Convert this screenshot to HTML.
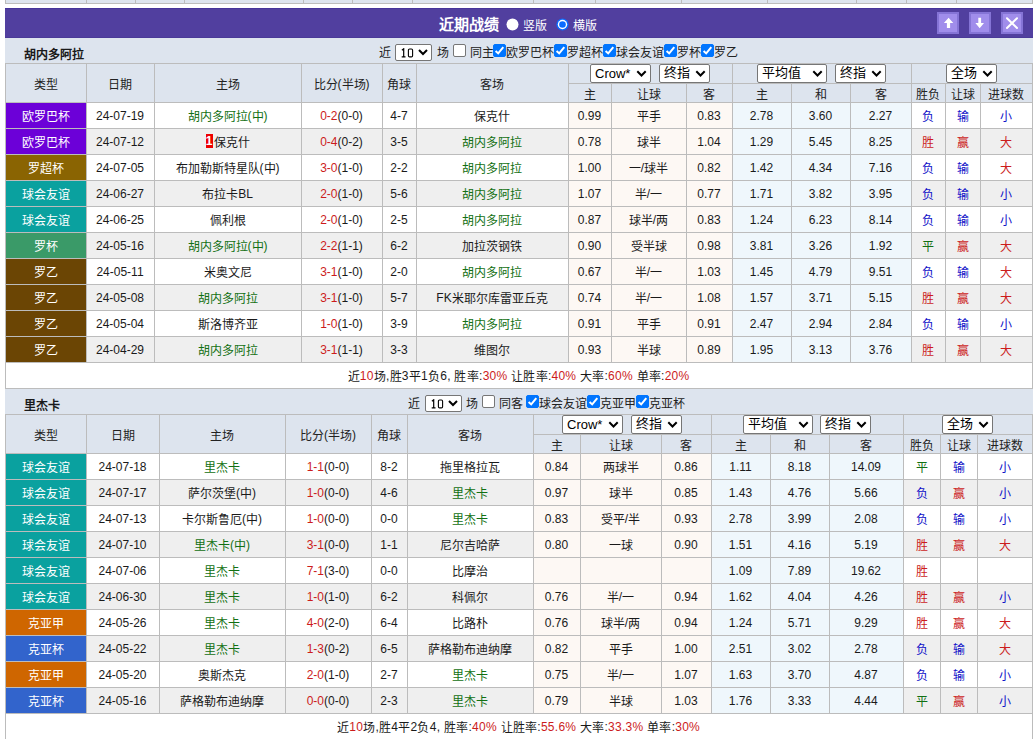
<!DOCTYPE html>
<html lang="zh-CN"><head><meta charset="utf-8"><title>近期战绩</title><style>
*{margin:0;padding:0;box-sizing:border-box}
html,body{width:1036px;height:739px;overflow:hidden;background:#fff}
body{font-family:"Liberation Sans",sans-serif;font-size:12px;color:#1a1a1a;position:relative}
.strip{position:absolute;left:5px;top:0;width:1028px;height:4px;background:#dde4ee;border:1px solid #bcbcbc;border-top:none}
.bar{position:absolute;left:5px;top:8px;width:1028px;height:30px;background:#513f9f;border-top:1px solid #45349a;border-bottom:1px solid #4a3a98}
.title{position:absolute;left:439px;top:15px;color:#fff;font-size:15px;font-weight:bold;line-height:18px}
.radio{position:absolute;top:18px}
.rl{position:absolute;top:18px;color:#fff;font-size:12px;line-height:15px}
.btn{position:absolute;top:12px;width:22px;height:22px;background:#a08deb;border:2px solid #8574d6}
.teamrow{position:absolute;height:25px;background:#dde4ee}
.team{position:absolute;height:25px;line-height:34px;font-weight:bold;color:#1a1a1a;font-size:12px}
.hdr{position:absolute;background:#dde4ee}
.cell{position:absolute;height:25px;line-height:26px;text-align:center;white-space:nowrap;overflow:hidden;background:#fff}
.cell.hc{background:transparent;color:#222}
.cell.alt{background:#efefef}
.cell.lg{color:#fff}
.cell.od{background:#fdf8f4}
.cell.av{background:#eff7fc}
.vl{position:absolute;width:1px;background:#bcbcbc}
.hl{position:absolute;height:1px;background:#bcbcbc}
.rc{display:inline-block;background:#e00;color:#fff;font-weight:bold;padding:0;width:7px;text-align:center;line-height:14px;height:14px;vertical-align:1px;margin-right:1px}
.summ{position:absolute;height:25px;line-height:26px;letter-spacing:0.27px;text-align:center;background:#fff;padding-left:0}
.ftx{position:absolute;height:25px;line-height:25px;white-space:nowrap;color:#222}
.ftx i{top:4px}
.fsel{position:absolute;width:37px;height:17px;border:1px solid #767676;border-radius:2px;background:#fff}
.fsel .d10{position:absolute;left:5px;top:3px}
.fsel .chev{position:absolute;right:3px;top:4px}
.mono{font-family:"Liberation Mono",monospace;font-size:12px;line-height:15px;position:relative;top:0px}
.cb{position:absolute;width:13px;height:13px;border:1px solid #767676;border-radius:2px;background:#fff}
.cb.on{background:#0075ff;border-color:#0075ff}
.cb.on svg{display:block;margin:-1px}
.sel{position:absolute;height:19px;border:1px solid #767676;border-radius:2px;background:#fff;padding:0 0 0 4px;color:#000;font-size:13px;line-height:17px;white-space:nowrap}
.sel .chev{position:absolute;right:3px;top:5px}
.chev{flex:none}
i{font-style:normal;position:relative;top:1px}
.sel i{top:-1px}
.hc i{top:1px}
title i{top:0}
</style></head><body>
<div class="strip"></div>
<div class="vl" style="left:86px;top:0;height:4px"></div>
<div class="vl" style="left:135px;top:0;height:4px"></div>
<div class="vl" style="left:184px;top:0;height:4px"></div>
<div class="vl" style="left:303px;top:0;height:4px"></div>
<div class="vl" style="left:352px;top:0;height:4px"></div>
<div class="vl" style="left:412px;top:0;height:4px"></div>
<div class="vl" style="left:533px;top:0;height:4px"></div>
<div class="vl" style="left:595px;top:0;height:4px"></div>
<div class="vl" style="left:681px;top:0;height:4px"></div>
<div class="vl" style="left:767px;top:0;height:4px"></div>
<div class="vl" style="left:856px;top:0;height:4px"></div>
<div class="vl" style="left:906px;top:0;height:4px"></div>
<div class="vl" style="left:956px;top:0;height:4px"></div>
<div class="bar"></div>
<div class="title"><i>近期战绩</i></div>
<svg class="radio" style="left:506px" width="13" height="13" viewBox="0 0 13 13"><circle cx="6.5" cy="6.5" r="6" fill="#fff"/></svg><div class="rl" style="left:523px"><i>竖版</i></div>
<svg class="radio" style="left:556px" width="13" height="13" viewBox="0 0 13 13"><circle cx="6.5" cy="6.5" r="6.1" fill="#0b6cff"/><circle cx="6.5" cy="6.5" r="4.7" fill="#fff"/><circle cx="6.5" cy="6.5" r="3.3" fill="#0b6cff"/></svg><div class="rl" style="left:573px"><i>横版</i></div>
<div class="btn" style="left:937px"><svg width="18" height="18" viewBox="0 0 18 18"><path d="M9.6 3.8 L14.3 8.9 L11.1 8.9 L11.1 14 L7.9 14 L7.9 8.9 L4.9 8.9 Z" fill="#fff"/></svg></div>
<div class="btn" style="left:969px"><svg width="18" height="18" viewBox="0 0 18 18"><path d="M8.7 14.3 L13 8.9 L10.1 8.9 L10.1 3.8 L7.3 3.8 L7.3 8.9 L4.4 8.9 Z" fill="#fff"/></svg></div>
<div class="btn" style="left:1001px"><svg width="18" height="18" viewBox="0 0 18 18"><path d="M4 4.2 L14 14 M14 4.2 L4 14" stroke="#fff" stroke-width="2" stroke-linecap="round"/></svg></div>
<div class="teamrow" style="top:38px;left:5px;width:1028px"></div>
<div class="team" style="top:37px;left:24px"><i>胡内多阿拉</i></div>
<div class="hdr" style="top:63px;left:5px;width:1027px;height:39px"></div>
<div class="cell hc" style="left:5px;top:63px;width:81px;height:39px;line-height:43px"><i>类型</i></div>
<div class="cell hc" style="left:86px;top:63px;width:68px;height:39px;line-height:43px"><i>日期</i></div>
<div class="cell hc" style="left:154px;top:63px;width:147px;height:39px;line-height:43px"><i>主场</i></div>
<div class="cell hc" style="left:301px;top:63px;width:81px;height:39px;line-height:43px"><i>比分</i>(<i>半场</i>)</div>
<div class="cell hc" style="left:382px;top:63px;width:34px;height:39px;line-height:43px"><i>角球</i></div>
<div class="cell hc" style="left:416px;top:63px;width:152px;height:39px;line-height:43px"><i>客场</i></div>
<div class="cell hc" style="left:568px;top:83px;width:43px;height:19px;line-height:23px"><i>主</i></div>
<div class="cell hc" style="left:611px;top:83px;width:75px;height:19px;line-height:23px"><i>让球</i></div>
<div class="cell hc" style="left:686px;top:83px;width:46px;height:19px;line-height:23px"><i>客</i></div>
<div class="cell hc" style="left:732px;top:83px;width:59px;height:19px;line-height:23px"><i>主</i></div>
<div class="cell hc" style="left:791px;top:83px;width:59px;height:19px;line-height:23px"><i>和</i></div>
<div class="cell hc" style="left:850px;top:83px;width:61px;height:19px;line-height:23px"><i>客</i></div>
<div class="cell hc" style="left:911px;top:83px;width:34px;height:19px;line-height:23px"><i>胜负</i></div>
<div class="cell hc" style="left:945px;top:83px;width:35px;height:19px;line-height:23px"><i>让球</i></div>
<div class="cell hc" style="left:980px;top:83px;width:52px;height:19px;line-height:23px"><i>进球数</i></div>
<div class="vl" style="left:568px;top:63px;height:40px"></div>
<div class="vl" style="left:732px;top:63px;height:40px"></div>
<div class="vl" style="left:911px;top:63px;height:40px"></div>
<div class="vl" style="left:86px;top:63px;height:40px"></div>
<div class="vl" style="left:154px;top:63px;height:40px"></div>
<div class="vl" style="left:301px;top:63px;height:40px"></div>
<div class="vl" style="left:382px;top:63px;height:40px"></div>
<div class="vl" style="left:416px;top:63px;height:40px"></div>
<div class="vl" style="left:568px;top:83px;height:20px"></div>
<div class="vl" style="left:611px;top:83px;height:20px"></div>
<div class="vl" style="left:686px;top:83px;height:20px"></div>
<div class="vl" style="left:732px;top:83px;height:20px"></div>
<div class="vl" style="left:791px;top:83px;height:20px"></div>
<div class="vl" style="left:850px;top:83px;height:20px"></div>
<div class="vl" style="left:911px;top:83px;height:20px"></div>
<div class="vl" style="left:945px;top:83px;height:20px"></div>
<div class="vl" style="left:980px;top:83px;height:20px"></div>
<div class="hl" style="left:568px;top:83px;width:464px"></div>
<div class="cell lg" style="left:5px;top:103px;width:81px;background:#6c00d8"><i>欧罗巴杯</i></div>
<div class="cell" style="left:86px;top:103px;width:68px">24-07-19</div>
<div class="cell" style="left:154px;top:103px;width:147px"><span style="color:#127012"><i>胡内多阿拉</i>(<i>中</i>)</span></div>
<div class="cell" style="left:301px;top:103px;width:81px"><span style="color:#cc1c1c">0-2</span>(0-0)</div>
<div class="cell" style="left:382px;top:103px;width:34px">4-7</div>
<div class="cell" style="left:416px;top:103px;width:152px"><span style="color:#1a1a1a"><i>保克什</i></span></div>
<div class="cell od" style="left:568px;top:103px;width:43px">0.99</div>
<div class="cell od" style="left:611px;top:103px;width:75px"><i>平手</i></div>
<div class="cell od" style="left:686px;top:103px;width:46px">0.83</div>
<div class="cell av" style="left:732px;top:103px;width:59px">2.78</div>
<div class="cell av" style="left:791px;top:103px;width:59px">3.60</div>
<div class="cell av" style="left:850px;top:103px;width:61px">2.27</div>
<div class="cell" style="left:911px;top:103px;width:34px;color:#1010c8"><i>负</i></div>
<div class="cell" style="left:945px;top:103px;width:35px;color:#1010c8"><i>输</i></div>
<div class="cell" style="left:980px;top:103px;width:52px;color:#1010c8"><i>小</i></div>
<div class="hl" style="left:5px;top:128px;width:1027px"></div>
<div class="vl" style="left:86px;top:102px;height:27px"></div>
<div class="vl" style="left:154px;top:102px;height:27px"></div>
<div class="vl" style="left:301px;top:102px;height:27px"></div>
<div class="vl" style="left:382px;top:102px;height:27px"></div>
<div class="vl" style="left:416px;top:102px;height:27px"></div>
<div class="vl" style="left:568px;top:102px;height:27px"></div>
<div class="vl" style="left:611px;top:102px;height:27px"></div>
<div class="vl" style="left:686px;top:102px;height:27px"></div>
<div class="vl" style="left:732px;top:102px;height:27px"></div>
<div class="vl" style="left:791px;top:102px;height:27px"></div>
<div class="vl" style="left:850px;top:102px;height:27px"></div>
<div class="vl" style="left:911px;top:102px;height:27px"></div>
<div class="vl" style="left:945px;top:102px;height:27px"></div>
<div class="vl" style="left:980px;top:102px;height:27px"></div>
<div class="cell lg" style="left:5px;top:129px;width:81px;background:#6c00d8"><i>欧罗巴杯</i></div>
<div class="cell alt" style="left:86px;top:129px;width:68px">24-07-12</div>
<div class="cell alt" style="left:154px;top:129px;width:147px"><span style="color:#1a1a1a"><span class="rc">1</span><i>保克什</i></span></div>
<div class="cell alt" style="left:301px;top:129px;width:81px"><span style="color:#cc1c1c">0-4</span>(0-2)</div>
<div class="cell alt" style="left:382px;top:129px;width:34px">3-5</div>
<div class="cell alt" style="left:416px;top:129px;width:152px"><span style="color:#127012"><i>胡内多阿拉</i></span></div>
<div class="cell od" style="left:568px;top:129px;width:43px">0.78</div>
<div class="cell od" style="left:611px;top:129px;width:75px"><i>球半</i></div>
<div class="cell od" style="left:686px;top:129px;width:46px">1.04</div>
<div class="cell av" style="left:732px;top:129px;width:59px">1.29</div>
<div class="cell av" style="left:791px;top:129px;width:59px">5.45</div>
<div class="cell av" style="left:850px;top:129px;width:61px">8.25</div>
<div class="cell alt" style="left:911px;top:129px;width:34px;color:#cc1c1c"><i>胜</i></div>
<div class="cell alt" style="left:945px;top:129px;width:35px;color:#cc1c1c"><i>赢</i></div>
<div class="cell alt" style="left:980px;top:129px;width:52px;color:#cc1c1c"><i>大</i></div>
<div class="hl" style="left:5px;top:154px;width:1027px"></div>
<div class="vl" style="left:86px;top:128px;height:27px"></div>
<div class="vl" style="left:154px;top:128px;height:27px"></div>
<div class="vl" style="left:301px;top:128px;height:27px"></div>
<div class="vl" style="left:382px;top:128px;height:27px"></div>
<div class="vl" style="left:416px;top:128px;height:27px"></div>
<div class="vl" style="left:568px;top:128px;height:27px"></div>
<div class="vl" style="left:611px;top:128px;height:27px"></div>
<div class="vl" style="left:686px;top:128px;height:27px"></div>
<div class="vl" style="left:732px;top:128px;height:27px"></div>
<div class="vl" style="left:791px;top:128px;height:27px"></div>
<div class="vl" style="left:850px;top:128px;height:27px"></div>
<div class="vl" style="left:911px;top:128px;height:27px"></div>
<div class="vl" style="left:945px;top:128px;height:27px"></div>
<div class="vl" style="left:980px;top:128px;height:27px"></div>
<div class="cell lg" style="left:5px;top:155px;width:81px;background:#8a6402"><i>罗超杯</i></div>
<div class="cell" style="left:86px;top:155px;width:68px">24-07-05</div>
<div class="cell" style="left:154px;top:155px;width:147px"><span style="color:#1a1a1a"><i>布加勒斯特星队</i>(<i>中</i>)</span></div>
<div class="cell" style="left:301px;top:155px;width:81px"><span style="color:#cc1c1c">3-0</span>(1-0)</div>
<div class="cell" style="left:382px;top:155px;width:34px">2-2</div>
<div class="cell" style="left:416px;top:155px;width:152px"><span style="color:#127012"><i>胡内多阿拉</i></span></div>
<div class="cell od" style="left:568px;top:155px;width:43px">1.00</div>
<div class="cell od" style="left:611px;top:155px;width:75px"><i>一</i>/<i>球半</i></div>
<div class="cell od" style="left:686px;top:155px;width:46px">0.82</div>
<div class="cell av" style="left:732px;top:155px;width:59px">1.42</div>
<div class="cell av" style="left:791px;top:155px;width:59px">4.34</div>
<div class="cell av" style="left:850px;top:155px;width:61px">7.16</div>
<div class="cell" style="left:911px;top:155px;width:34px;color:#1010c8"><i>负</i></div>
<div class="cell" style="left:945px;top:155px;width:35px;color:#1010c8"><i>输</i></div>
<div class="cell" style="left:980px;top:155px;width:52px;color:#cc1c1c"><i>大</i></div>
<div class="hl" style="left:5px;top:180px;width:1027px"></div>
<div class="vl" style="left:86px;top:154px;height:27px"></div>
<div class="vl" style="left:154px;top:154px;height:27px"></div>
<div class="vl" style="left:301px;top:154px;height:27px"></div>
<div class="vl" style="left:382px;top:154px;height:27px"></div>
<div class="vl" style="left:416px;top:154px;height:27px"></div>
<div class="vl" style="left:568px;top:154px;height:27px"></div>
<div class="vl" style="left:611px;top:154px;height:27px"></div>
<div class="vl" style="left:686px;top:154px;height:27px"></div>
<div class="vl" style="left:732px;top:154px;height:27px"></div>
<div class="vl" style="left:791px;top:154px;height:27px"></div>
<div class="vl" style="left:850px;top:154px;height:27px"></div>
<div class="vl" style="left:911px;top:154px;height:27px"></div>
<div class="vl" style="left:945px;top:154px;height:27px"></div>
<div class="vl" style="left:980px;top:154px;height:27px"></div>
<div class="cell lg" style="left:5px;top:181px;width:81px;background:#0aa19f"><i>球会友谊</i></div>
<div class="cell alt" style="left:86px;top:181px;width:68px">24-06-27</div>
<div class="cell alt" style="left:154px;top:181px;width:147px"><span style="color:#1a1a1a"><i>布拉卡</i>BL</span></div>
<div class="cell alt" style="left:301px;top:181px;width:81px"><span style="color:#cc1c1c">2-0</span>(1-0)</div>
<div class="cell alt" style="left:382px;top:181px;width:34px">5-6</div>
<div class="cell alt" style="left:416px;top:181px;width:152px"><span style="color:#127012"><i>胡内多阿拉</i></span></div>
<div class="cell od" style="left:568px;top:181px;width:43px">1.07</div>
<div class="cell od" style="left:611px;top:181px;width:75px"><i>半</i>/<i>一</i></div>
<div class="cell od" style="left:686px;top:181px;width:46px">0.77</div>
<div class="cell av" style="left:732px;top:181px;width:59px">1.71</div>
<div class="cell av" style="left:791px;top:181px;width:59px">3.82</div>
<div class="cell av" style="left:850px;top:181px;width:61px">3.95</div>
<div class="cell alt" style="left:911px;top:181px;width:34px;color:#1010c8"><i>负</i></div>
<div class="cell alt" style="left:945px;top:181px;width:35px;color:#1010c8"><i>输</i></div>
<div class="cell alt" style="left:980px;top:181px;width:52px;color:#1010c8"><i>小</i></div>
<div class="hl" style="left:5px;top:206px;width:1027px"></div>
<div class="vl" style="left:86px;top:180px;height:27px"></div>
<div class="vl" style="left:154px;top:180px;height:27px"></div>
<div class="vl" style="left:301px;top:180px;height:27px"></div>
<div class="vl" style="left:382px;top:180px;height:27px"></div>
<div class="vl" style="left:416px;top:180px;height:27px"></div>
<div class="vl" style="left:568px;top:180px;height:27px"></div>
<div class="vl" style="left:611px;top:180px;height:27px"></div>
<div class="vl" style="left:686px;top:180px;height:27px"></div>
<div class="vl" style="left:732px;top:180px;height:27px"></div>
<div class="vl" style="left:791px;top:180px;height:27px"></div>
<div class="vl" style="left:850px;top:180px;height:27px"></div>
<div class="vl" style="left:911px;top:180px;height:27px"></div>
<div class="vl" style="left:945px;top:180px;height:27px"></div>
<div class="vl" style="left:980px;top:180px;height:27px"></div>
<div class="cell lg" style="left:5px;top:207px;width:81px;background:#0aa19f"><i>球会友谊</i></div>
<div class="cell" style="left:86px;top:207px;width:68px">24-06-25</div>
<div class="cell" style="left:154px;top:207px;width:147px"><span style="color:#1a1a1a"><i>佩利根</i></span></div>
<div class="cell" style="left:301px;top:207px;width:81px"><span style="color:#cc1c1c">2-0</span>(1-0)</div>
<div class="cell" style="left:382px;top:207px;width:34px">2-5</div>
<div class="cell" style="left:416px;top:207px;width:152px"><span style="color:#127012"><i>胡内多阿拉</i></span></div>
<div class="cell od" style="left:568px;top:207px;width:43px">0.87</div>
<div class="cell od" style="left:611px;top:207px;width:75px"><i>球半</i>/<i>两</i></div>
<div class="cell od" style="left:686px;top:207px;width:46px">0.83</div>
<div class="cell av" style="left:732px;top:207px;width:59px">1.24</div>
<div class="cell av" style="left:791px;top:207px;width:59px">6.23</div>
<div class="cell av" style="left:850px;top:207px;width:61px">8.14</div>
<div class="cell" style="left:911px;top:207px;width:34px;color:#1010c8"><i>负</i></div>
<div class="cell" style="left:945px;top:207px;width:35px;color:#1010c8"><i>输</i></div>
<div class="cell" style="left:980px;top:207px;width:52px;color:#1010c8"><i>小</i></div>
<div class="hl" style="left:5px;top:232px;width:1027px"></div>
<div class="vl" style="left:86px;top:206px;height:27px"></div>
<div class="vl" style="left:154px;top:206px;height:27px"></div>
<div class="vl" style="left:301px;top:206px;height:27px"></div>
<div class="vl" style="left:382px;top:206px;height:27px"></div>
<div class="vl" style="left:416px;top:206px;height:27px"></div>
<div class="vl" style="left:568px;top:206px;height:27px"></div>
<div class="vl" style="left:611px;top:206px;height:27px"></div>
<div class="vl" style="left:686px;top:206px;height:27px"></div>
<div class="vl" style="left:732px;top:206px;height:27px"></div>
<div class="vl" style="left:791px;top:206px;height:27px"></div>
<div class="vl" style="left:850px;top:206px;height:27px"></div>
<div class="vl" style="left:911px;top:206px;height:27px"></div>
<div class="vl" style="left:945px;top:206px;height:27px"></div>
<div class="vl" style="left:980px;top:206px;height:27px"></div>
<div class="cell lg" style="left:5px;top:233px;width:81px;background:#3a9a68"><i>罗杯</i></div>
<div class="cell alt" style="left:86px;top:233px;width:68px">24-05-16</div>
<div class="cell alt" style="left:154px;top:233px;width:147px"><span style="color:#127012"><i>胡内多阿拉</i>(<i>中</i>)</span></div>
<div class="cell alt" style="left:301px;top:233px;width:81px"><span style="color:#cc1c1c">2-2</span>(1-1)</div>
<div class="cell alt" style="left:382px;top:233px;width:34px">6-2</div>
<div class="cell alt" style="left:416px;top:233px;width:152px"><span style="color:#1a1a1a"><i>加拉茨钢铁</i></span></div>
<div class="cell od" style="left:568px;top:233px;width:43px">0.90</div>
<div class="cell od" style="left:611px;top:233px;width:75px"><i>受半球</i></div>
<div class="cell od" style="left:686px;top:233px;width:46px">0.98</div>
<div class="cell av" style="left:732px;top:233px;width:59px">3.81</div>
<div class="cell av" style="left:791px;top:233px;width:59px">3.26</div>
<div class="cell av" style="left:850px;top:233px;width:61px">1.92</div>
<div class="cell alt" style="left:911px;top:233px;width:34px;color:#127012"><i>平</i></div>
<div class="cell alt" style="left:945px;top:233px;width:35px;color:#cc1c1c"><i>赢</i></div>
<div class="cell alt" style="left:980px;top:233px;width:52px;color:#cc1c1c"><i>大</i></div>
<div class="hl" style="left:5px;top:258px;width:1027px"></div>
<div class="vl" style="left:86px;top:232px;height:27px"></div>
<div class="vl" style="left:154px;top:232px;height:27px"></div>
<div class="vl" style="left:301px;top:232px;height:27px"></div>
<div class="vl" style="left:382px;top:232px;height:27px"></div>
<div class="vl" style="left:416px;top:232px;height:27px"></div>
<div class="vl" style="left:568px;top:232px;height:27px"></div>
<div class="vl" style="left:611px;top:232px;height:27px"></div>
<div class="vl" style="left:686px;top:232px;height:27px"></div>
<div class="vl" style="left:732px;top:232px;height:27px"></div>
<div class="vl" style="left:791px;top:232px;height:27px"></div>
<div class="vl" style="left:850px;top:232px;height:27px"></div>
<div class="vl" style="left:911px;top:232px;height:27px"></div>
<div class="vl" style="left:945px;top:232px;height:27px"></div>
<div class="vl" style="left:980px;top:232px;height:27px"></div>
<div class="cell lg" style="left:5px;top:259px;width:81px;background:#6b4504"><i>罗乙</i></div>
<div class="cell" style="left:86px;top:259px;width:68px">24-05-11</div>
<div class="cell" style="left:154px;top:259px;width:147px"><span style="color:#1a1a1a"><i>米奥文尼</i></span></div>
<div class="cell" style="left:301px;top:259px;width:81px"><span style="color:#cc1c1c">3-1</span>(1-0)</div>
<div class="cell" style="left:382px;top:259px;width:34px">2-0</div>
<div class="cell" style="left:416px;top:259px;width:152px"><span style="color:#127012"><i>胡内多阿拉</i></span></div>
<div class="cell od" style="left:568px;top:259px;width:43px">0.67</div>
<div class="cell od" style="left:611px;top:259px;width:75px"><i>半</i>/<i>一</i></div>
<div class="cell od" style="left:686px;top:259px;width:46px">1.03</div>
<div class="cell av" style="left:732px;top:259px;width:59px">1.45</div>
<div class="cell av" style="left:791px;top:259px;width:59px">4.79</div>
<div class="cell av" style="left:850px;top:259px;width:61px">9.51</div>
<div class="cell" style="left:911px;top:259px;width:34px;color:#1010c8"><i>负</i></div>
<div class="cell" style="left:945px;top:259px;width:35px;color:#1010c8"><i>输</i></div>
<div class="cell" style="left:980px;top:259px;width:52px;color:#cc1c1c"><i>大</i></div>
<div class="hl" style="left:5px;top:284px;width:1027px"></div>
<div class="vl" style="left:86px;top:258px;height:27px"></div>
<div class="vl" style="left:154px;top:258px;height:27px"></div>
<div class="vl" style="left:301px;top:258px;height:27px"></div>
<div class="vl" style="left:382px;top:258px;height:27px"></div>
<div class="vl" style="left:416px;top:258px;height:27px"></div>
<div class="vl" style="left:568px;top:258px;height:27px"></div>
<div class="vl" style="left:611px;top:258px;height:27px"></div>
<div class="vl" style="left:686px;top:258px;height:27px"></div>
<div class="vl" style="left:732px;top:258px;height:27px"></div>
<div class="vl" style="left:791px;top:258px;height:27px"></div>
<div class="vl" style="left:850px;top:258px;height:27px"></div>
<div class="vl" style="left:911px;top:258px;height:27px"></div>
<div class="vl" style="left:945px;top:258px;height:27px"></div>
<div class="vl" style="left:980px;top:258px;height:27px"></div>
<div class="cell lg" style="left:5px;top:285px;width:81px;background:#6b4504"><i>罗乙</i></div>
<div class="cell alt" style="left:86px;top:285px;width:68px">24-05-08</div>
<div class="cell alt" style="left:154px;top:285px;width:147px"><span style="color:#127012"><i>胡内多阿拉</i></span></div>
<div class="cell alt" style="left:301px;top:285px;width:81px"><span style="color:#cc1c1c">3-1</span>(1-0)</div>
<div class="cell alt" style="left:382px;top:285px;width:34px">5-7</div>
<div class="cell alt" style="left:416px;top:285px;width:152px"><span style="color:#1a1a1a">FK<i>米耶尔库雷亚丘克</i></span></div>
<div class="cell od" style="left:568px;top:285px;width:43px">0.74</div>
<div class="cell od" style="left:611px;top:285px;width:75px"><i>半</i>/<i>一</i></div>
<div class="cell od" style="left:686px;top:285px;width:46px">1.08</div>
<div class="cell av" style="left:732px;top:285px;width:59px">1.57</div>
<div class="cell av" style="left:791px;top:285px;width:59px">3.71</div>
<div class="cell av" style="left:850px;top:285px;width:61px">5.15</div>
<div class="cell alt" style="left:911px;top:285px;width:34px;color:#cc1c1c"><i>胜</i></div>
<div class="cell alt" style="left:945px;top:285px;width:35px;color:#cc1c1c"><i>赢</i></div>
<div class="cell alt" style="left:980px;top:285px;width:52px;color:#cc1c1c"><i>大</i></div>
<div class="hl" style="left:5px;top:310px;width:1027px"></div>
<div class="vl" style="left:86px;top:284px;height:27px"></div>
<div class="vl" style="left:154px;top:284px;height:27px"></div>
<div class="vl" style="left:301px;top:284px;height:27px"></div>
<div class="vl" style="left:382px;top:284px;height:27px"></div>
<div class="vl" style="left:416px;top:284px;height:27px"></div>
<div class="vl" style="left:568px;top:284px;height:27px"></div>
<div class="vl" style="left:611px;top:284px;height:27px"></div>
<div class="vl" style="left:686px;top:284px;height:27px"></div>
<div class="vl" style="left:732px;top:284px;height:27px"></div>
<div class="vl" style="left:791px;top:284px;height:27px"></div>
<div class="vl" style="left:850px;top:284px;height:27px"></div>
<div class="vl" style="left:911px;top:284px;height:27px"></div>
<div class="vl" style="left:945px;top:284px;height:27px"></div>
<div class="vl" style="left:980px;top:284px;height:27px"></div>
<div class="cell lg" style="left:5px;top:311px;width:81px;background:#6b4504"><i>罗乙</i></div>
<div class="cell" style="left:86px;top:311px;width:68px">24-05-04</div>
<div class="cell" style="left:154px;top:311px;width:147px"><span style="color:#1a1a1a"><i>斯洛博齐亚</i></span></div>
<div class="cell" style="left:301px;top:311px;width:81px"><span style="color:#cc1c1c">1-0</span>(1-0)</div>
<div class="cell" style="left:382px;top:311px;width:34px">3-9</div>
<div class="cell" style="left:416px;top:311px;width:152px"><span style="color:#127012"><i>胡内多阿拉</i></span></div>
<div class="cell od" style="left:568px;top:311px;width:43px">0.91</div>
<div class="cell od" style="left:611px;top:311px;width:75px"><i>平手</i></div>
<div class="cell od" style="left:686px;top:311px;width:46px">0.91</div>
<div class="cell av" style="left:732px;top:311px;width:59px">2.47</div>
<div class="cell av" style="left:791px;top:311px;width:59px">2.94</div>
<div class="cell av" style="left:850px;top:311px;width:61px">2.84</div>
<div class="cell" style="left:911px;top:311px;width:34px;color:#1010c8"><i>负</i></div>
<div class="cell" style="left:945px;top:311px;width:35px;color:#1010c8"><i>输</i></div>
<div class="cell" style="left:980px;top:311px;width:52px;color:#1010c8"><i>小</i></div>
<div class="hl" style="left:5px;top:336px;width:1027px"></div>
<div class="vl" style="left:86px;top:310px;height:27px"></div>
<div class="vl" style="left:154px;top:310px;height:27px"></div>
<div class="vl" style="left:301px;top:310px;height:27px"></div>
<div class="vl" style="left:382px;top:310px;height:27px"></div>
<div class="vl" style="left:416px;top:310px;height:27px"></div>
<div class="vl" style="left:568px;top:310px;height:27px"></div>
<div class="vl" style="left:611px;top:310px;height:27px"></div>
<div class="vl" style="left:686px;top:310px;height:27px"></div>
<div class="vl" style="left:732px;top:310px;height:27px"></div>
<div class="vl" style="left:791px;top:310px;height:27px"></div>
<div class="vl" style="left:850px;top:310px;height:27px"></div>
<div class="vl" style="left:911px;top:310px;height:27px"></div>
<div class="vl" style="left:945px;top:310px;height:27px"></div>
<div class="vl" style="left:980px;top:310px;height:27px"></div>
<div class="cell lg" style="left:5px;top:337px;width:81px;background:#6b4504"><i>罗乙</i></div>
<div class="cell alt" style="left:86px;top:337px;width:68px">24-04-29</div>
<div class="cell alt" style="left:154px;top:337px;width:147px"><span style="color:#127012"><i>胡内多阿拉</i></span></div>
<div class="cell alt" style="left:301px;top:337px;width:81px"><span style="color:#cc1c1c">3-1</span>(1-1)</div>
<div class="cell alt" style="left:382px;top:337px;width:34px">3-3</div>
<div class="cell alt" style="left:416px;top:337px;width:152px"><span style="color:#1a1a1a"><i>维图尔</i></span></div>
<div class="cell od" style="left:568px;top:337px;width:43px">0.93</div>
<div class="cell od" style="left:611px;top:337px;width:75px"><i>半球</i></div>
<div class="cell od" style="left:686px;top:337px;width:46px">0.89</div>
<div class="cell av" style="left:732px;top:337px;width:59px">1.95</div>
<div class="cell av" style="left:791px;top:337px;width:59px">3.13</div>
<div class="cell av" style="left:850px;top:337px;width:61px">3.76</div>
<div class="cell alt" style="left:911px;top:337px;width:34px;color:#cc1c1c"><i>胜</i></div>
<div class="cell alt" style="left:945px;top:337px;width:35px;color:#cc1c1c"><i>赢</i></div>
<div class="cell alt" style="left:980px;top:337px;width:52px;color:#cc1c1c"><i>大</i></div>
<div class="hl" style="left:5px;top:362px;width:1027px"></div>
<div class="vl" style="left:86px;top:336px;height:27px"></div>
<div class="vl" style="left:154px;top:336px;height:27px"></div>
<div class="vl" style="left:301px;top:336px;height:27px"></div>
<div class="vl" style="left:382px;top:336px;height:27px"></div>
<div class="vl" style="left:416px;top:336px;height:27px"></div>
<div class="vl" style="left:568px;top:336px;height:27px"></div>
<div class="vl" style="left:611px;top:336px;height:27px"></div>
<div class="vl" style="left:686px;top:336px;height:27px"></div>
<div class="vl" style="left:732px;top:336px;height:27px"></div>
<div class="vl" style="left:791px;top:336px;height:27px"></div>
<div class="vl" style="left:850px;top:336px;height:27px"></div>
<div class="vl" style="left:911px;top:336px;height:27px"></div>
<div class="vl" style="left:945px;top:336px;height:27px"></div>
<div class="vl" style="left:980px;top:336px;height:27px"></div>
<div class="hl" style="left:5px;top:63px;width:1027px"></div>
<div class="hl" style="left:5px;top:102px;width:1027px"></div>
<div class="summ" style="left:5px;top:363px;width:1027px"><i>近</i><span style="color:#cc1c1c">10</span><i>场</i>,<i>胜</i>3<i>平</i>1<i>负</i>6, <i>胜率</i>:<span style="color:#cc1c1c">30%</span> <i>让胜率</i>:<span style="color:#cc1c1c">40%</span> <i>大率</i>:<span style="color:#cc1c1c">60%</span> <i>单率</i>:<span style="color:#cc1c1c">20%</span></div>
<div class="hl" style="left:5px;top:388px;width:1027px"></div>
<div class="vl" style="left:5px;top:63px;height:327px"></div>
<div class="vl" style="left:1032px;top:63px;height:327px"></div>
<div class="ftx" style="left:379px;top:37px;"><i>近</i></div><div class="fsel" style="left:395px;top:44px"><svg class="d10" width="14" height="11" viewBox="0 0 14 11"><path d="M0.9 2.3 L2.7 0.8 L2.7 8.9 M0.7 8.9 L4.5 8.9" fill="none" stroke="#000" stroke-width="1.2"/><rect x="7.4" y="1" width="4.2" height="7.9" rx="1.2" fill="none" stroke="#000" stroke-width="1.1"/></svg><svg class="chev" width="10" height="7" viewBox="0 0 10 7"><path d="M1 1 L5 5 L9 1" fill="none" stroke="#000" stroke-width="2"/></svg></div><div class="ftx" style="left:437px;top:37px;"><i>场</i></div><div class="cb" style="left:453px;top:44px"></div><div class="ftx" style="left:470px;top:37px;"><i>同主</i></div><div class="cb on" style="left:493px;top:44px"><svg width="13" height="13" viewBox="0 0 13 13"><path d="M2.6 7 L5.2 9.4 L10.3 3.2" fill="none" stroke="#fff" stroke-width="2"/></svg></div><div class="ftx" style="left:506px;top:37px;"><i>欧罗巴杯</i></div><div class="cb on" style="left:554px;top:44px"><svg width="13" height="13" viewBox="0 0 13 13"><path d="M2.6 7 L5.2 9.4 L10.3 3.2" fill="none" stroke="#fff" stroke-width="2"/></svg></div><div class="ftx" style="left:567px;top:37px;"><i>罗超杯</i></div><div class="cb on" style="left:603px;top:44px"><svg width="13" height="13" viewBox="0 0 13 13"><path d="M2.6 7 L5.2 9.4 L10.3 3.2" fill="none" stroke="#fff" stroke-width="2"/></svg></div><div class="ftx" style="left:616px;top:37px;"><i>球会友谊</i></div><div class="cb on" style="left:664px;top:44px"><svg width="13" height="13" viewBox="0 0 13 13"><path d="M2.6 7 L5.2 9.4 L10.3 3.2" fill="none" stroke="#fff" stroke-width="2"/></svg></div><div class="ftx" style="left:677px;top:37px;"><i>罗杯</i></div><div class="cb on" style="left:701px;top:44px"><svg width="13" height="13" viewBox="0 0 13 13"><path d="M2.6 7 L5.2 9.4 L10.3 3.2" fill="none" stroke="#fff" stroke-width="2"/></svg></div><div class="ftx" style="left:714px;top:37px;"><i>罗乙</i></div>
<div class="teamrow" style="top:389px;left:5px;width:1028px"></div>
<div class="team" style="top:388px;left:24px"><i>里杰卡</i></div>
<div class="hdr" style="top:414px;left:5px;width:1027px;height:39px"></div>
<div class="cell hc" style="left:5px;top:414px;width:81px;height:39px;line-height:43px"><i>类型</i></div>
<div class="cell hc" style="left:86px;top:414px;width:73px;height:39px;line-height:43px"><i>日期</i></div>
<div class="cell hc" style="left:159px;top:414px;width:126px;height:39px;line-height:43px"><i>主场</i></div>
<div class="cell hc" style="left:285px;top:414px;width:86px;height:39px;line-height:43px"><i>比分</i>(<i>半场</i>)</div>
<div class="cell hc" style="left:371px;top:414px;width:36px;height:39px;line-height:43px"><i>角球</i></div>
<div class="cell hc" style="left:407px;top:414px;width:126px;height:39px;line-height:43px"><i>客场</i></div>
<div class="cell hc" style="left:533px;top:434px;width:47px;height:19px;line-height:23px"><i>主</i></div>
<div class="cell hc" style="left:580px;top:434px;width:81px;height:19px;line-height:23px"><i>让球</i></div>
<div class="cell hc" style="left:661px;top:434px;width:50px;height:19px;line-height:23px"><i>客</i></div>
<div class="cell hc" style="left:711px;top:434px;width:59px;height:19px;line-height:23px"><i>主</i></div>
<div class="cell hc" style="left:770px;top:434px;width:59px;height:19px;line-height:23px"><i>和</i></div>
<div class="cell hc" style="left:829px;top:434px;width:74px;height:19px;line-height:23px"><i>客</i></div>
<div class="cell hc" style="left:903px;top:434px;width:37px;height:19px;line-height:23px"><i>胜负</i></div>
<div class="cell hc" style="left:940px;top:434px;width:37px;height:19px;line-height:23px"><i>让球</i></div>
<div class="cell hc" style="left:977px;top:434px;width:55px;height:19px;line-height:23px"><i>进球数</i></div>
<div class="vl" style="left:533px;top:414px;height:40px"></div>
<div class="vl" style="left:711px;top:414px;height:40px"></div>
<div class="vl" style="left:903px;top:414px;height:40px"></div>
<div class="vl" style="left:86px;top:414px;height:40px"></div>
<div class="vl" style="left:159px;top:414px;height:40px"></div>
<div class="vl" style="left:285px;top:414px;height:40px"></div>
<div class="vl" style="left:371px;top:414px;height:40px"></div>
<div class="vl" style="left:407px;top:414px;height:40px"></div>
<div class="vl" style="left:533px;top:434px;height:20px"></div>
<div class="vl" style="left:580px;top:434px;height:20px"></div>
<div class="vl" style="left:661px;top:434px;height:20px"></div>
<div class="vl" style="left:711px;top:434px;height:20px"></div>
<div class="vl" style="left:770px;top:434px;height:20px"></div>
<div class="vl" style="left:829px;top:434px;height:20px"></div>
<div class="vl" style="left:903px;top:434px;height:20px"></div>
<div class="vl" style="left:940px;top:434px;height:20px"></div>
<div class="vl" style="left:977px;top:434px;height:20px"></div>
<div class="hl" style="left:533px;top:434px;width:499px"></div>
<div class="cell lg" style="left:5px;top:454px;width:81px;background:#0aa19f"><i>球会友谊</i></div>
<div class="cell" style="left:86px;top:454px;width:73px">24-07-18</div>
<div class="cell" style="left:159px;top:454px;width:126px"><span style="color:#127012"><i>里杰卡</i></span></div>
<div class="cell" style="left:285px;top:454px;width:86px"><span style="color:#cc1c1c">1-1</span>(0-0)</div>
<div class="cell" style="left:371px;top:454px;width:36px">8-2</div>
<div class="cell" style="left:407px;top:454px;width:126px"><span style="color:#1a1a1a"><i>拖里格拉瓦</i></span></div>
<div class="cell od" style="left:533px;top:454px;width:47px">0.84</div>
<div class="cell od" style="left:580px;top:454px;width:81px"><i>两球半</i></div>
<div class="cell od" style="left:661px;top:454px;width:50px">0.86</div>
<div class="cell av" style="left:711px;top:454px;width:59px">1.11</div>
<div class="cell av" style="left:770px;top:454px;width:59px">8.18</div>
<div class="cell av" style="left:829px;top:454px;width:74px">14.09</div>
<div class="cell" style="left:903px;top:454px;width:37px;color:#127012"><i>平</i></div>
<div class="cell" style="left:940px;top:454px;width:37px;color:#1010c8"><i>输</i></div>
<div class="cell" style="left:977px;top:454px;width:55px;color:#1010c8"><i>小</i></div>
<div class="hl" style="left:5px;top:479px;width:1027px"></div>
<div class="vl" style="left:86px;top:453px;height:27px"></div>
<div class="vl" style="left:159px;top:453px;height:27px"></div>
<div class="vl" style="left:285px;top:453px;height:27px"></div>
<div class="vl" style="left:371px;top:453px;height:27px"></div>
<div class="vl" style="left:407px;top:453px;height:27px"></div>
<div class="vl" style="left:533px;top:453px;height:27px"></div>
<div class="vl" style="left:580px;top:453px;height:27px"></div>
<div class="vl" style="left:661px;top:453px;height:27px"></div>
<div class="vl" style="left:711px;top:453px;height:27px"></div>
<div class="vl" style="left:770px;top:453px;height:27px"></div>
<div class="vl" style="left:829px;top:453px;height:27px"></div>
<div class="vl" style="left:903px;top:453px;height:27px"></div>
<div class="vl" style="left:940px;top:453px;height:27px"></div>
<div class="vl" style="left:977px;top:453px;height:27px"></div>
<div class="cell lg" style="left:5px;top:480px;width:81px;background:#0aa19f"><i>球会友谊</i></div>
<div class="cell alt" style="left:86px;top:480px;width:73px">24-07-17</div>
<div class="cell alt" style="left:159px;top:480px;width:126px"><span style="color:#1a1a1a"><i>萨尔茨堡</i>(<i>中</i>)</span></div>
<div class="cell alt" style="left:285px;top:480px;width:86px"><span style="color:#cc1c1c">1-0</span>(0-0)</div>
<div class="cell alt" style="left:371px;top:480px;width:36px">4-6</div>
<div class="cell alt" style="left:407px;top:480px;width:126px"><span style="color:#127012"><i>里杰卡</i></span></div>
<div class="cell od" style="left:533px;top:480px;width:47px">0.97</div>
<div class="cell od" style="left:580px;top:480px;width:81px"><i>球半</i></div>
<div class="cell od" style="left:661px;top:480px;width:50px">0.85</div>
<div class="cell av" style="left:711px;top:480px;width:59px">1.43</div>
<div class="cell av" style="left:770px;top:480px;width:59px">4.76</div>
<div class="cell av" style="left:829px;top:480px;width:74px">5.66</div>
<div class="cell alt" style="left:903px;top:480px;width:37px;color:#1010c8"><i>负</i></div>
<div class="cell alt" style="left:940px;top:480px;width:37px;color:#cc1c1c"><i>赢</i></div>
<div class="cell alt" style="left:977px;top:480px;width:55px;color:#1010c8"><i>小</i></div>
<div class="hl" style="left:5px;top:505px;width:1027px"></div>
<div class="vl" style="left:86px;top:479px;height:27px"></div>
<div class="vl" style="left:159px;top:479px;height:27px"></div>
<div class="vl" style="left:285px;top:479px;height:27px"></div>
<div class="vl" style="left:371px;top:479px;height:27px"></div>
<div class="vl" style="left:407px;top:479px;height:27px"></div>
<div class="vl" style="left:533px;top:479px;height:27px"></div>
<div class="vl" style="left:580px;top:479px;height:27px"></div>
<div class="vl" style="left:661px;top:479px;height:27px"></div>
<div class="vl" style="left:711px;top:479px;height:27px"></div>
<div class="vl" style="left:770px;top:479px;height:27px"></div>
<div class="vl" style="left:829px;top:479px;height:27px"></div>
<div class="vl" style="left:903px;top:479px;height:27px"></div>
<div class="vl" style="left:940px;top:479px;height:27px"></div>
<div class="vl" style="left:977px;top:479px;height:27px"></div>
<div class="cell lg" style="left:5px;top:506px;width:81px;background:#0aa19f"><i>球会友谊</i></div>
<div class="cell" style="left:86px;top:506px;width:73px">24-07-13</div>
<div class="cell" style="left:159px;top:506px;width:126px"><span style="color:#1a1a1a"><i>卡尔斯鲁厄</i>(<i>中</i>)</span></div>
<div class="cell" style="left:285px;top:506px;width:86px"><span style="color:#cc1c1c">1-0</span>(0-0)</div>
<div class="cell" style="left:371px;top:506px;width:36px">0-0</div>
<div class="cell" style="left:407px;top:506px;width:126px"><span style="color:#127012"><i>里杰卡</i></span></div>
<div class="cell od" style="left:533px;top:506px;width:47px">0.83</div>
<div class="cell od" style="left:580px;top:506px;width:81px"><i>受平</i>/<i>半</i></div>
<div class="cell od" style="left:661px;top:506px;width:50px">0.93</div>
<div class="cell av" style="left:711px;top:506px;width:59px">2.78</div>
<div class="cell av" style="left:770px;top:506px;width:59px">3.99</div>
<div class="cell av" style="left:829px;top:506px;width:74px">2.08</div>
<div class="cell" style="left:903px;top:506px;width:37px;color:#1010c8"><i>负</i></div>
<div class="cell" style="left:940px;top:506px;width:37px;color:#1010c8"><i>输</i></div>
<div class="cell" style="left:977px;top:506px;width:55px;color:#1010c8"><i>小</i></div>
<div class="hl" style="left:5px;top:531px;width:1027px"></div>
<div class="vl" style="left:86px;top:505px;height:27px"></div>
<div class="vl" style="left:159px;top:505px;height:27px"></div>
<div class="vl" style="left:285px;top:505px;height:27px"></div>
<div class="vl" style="left:371px;top:505px;height:27px"></div>
<div class="vl" style="left:407px;top:505px;height:27px"></div>
<div class="vl" style="left:533px;top:505px;height:27px"></div>
<div class="vl" style="left:580px;top:505px;height:27px"></div>
<div class="vl" style="left:661px;top:505px;height:27px"></div>
<div class="vl" style="left:711px;top:505px;height:27px"></div>
<div class="vl" style="left:770px;top:505px;height:27px"></div>
<div class="vl" style="left:829px;top:505px;height:27px"></div>
<div class="vl" style="left:903px;top:505px;height:27px"></div>
<div class="vl" style="left:940px;top:505px;height:27px"></div>
<div class="vl" style="left:977px;top:505px;height:27px"></div>
<div class="cell lg" style="left:5px;top:532px;width:81px;background:#0aa19f"><i>球会友谊</i></div>
<div class="cell alt" style="left:86px;top:532px;width:73px">24-07-10</div>
<div class="cell alt" style="left:159px;top:532px;width:126px"><span style="color:#127012"><i>里杰卡</i>(<i>中</i>)</span></div>
<div class="cell alt" style="left:285px;top:532px;width:86px"><span style="color:#cc1c1c">3-1</span>(0-0)</div>
<div class="cell alt" style="left:371px;top:532px;width:36px">1-1</div>
<div class="cell alt" style="left:407px;top:532px;width:126px"><span style="color:#1a1a1a"><i>尼尔吉哈萨</i></span></div>
<div class="cell od" style="left:533px;top:532px;width:47px">0.80</div>
<div class="cell od" style="left:580px;top:532px;width:81px"><i>一球</i></div>
<div class="cell od" style="left:661px;top:532px;width:50px">0.90</div>
<div class="cell av" style="left:711px;top:532px;width:59px">1.51</div>
<div class="cell av" style="left:770px;top:532px;width:59px">4.16</div>
<div class="cell av" style="left:829px;top:532px;width:74px">5.19</div>
<div class="cell alt" style="left:903px;top:532px;width:37px;color:#cc1c1c"><i>胜</i></div>
<div class="cell alt" style="left:940px;top:532px;width:37px;color:#cc1c1c"><i>赢</i></div>
<div class="cell alt" style="left:977px;top:532px;width:55px;color:#cc1c1c"><i>大</i></div>
<div class="hl" style="left:5px;top:557px;width:1027px"></div>
<div class="vl" style="left:86px;top:531px;height:27px"></div>
<div class="vl" style="left:159px;top:531px;height:27px"></div>
<div class="vl" style="left:285px;top:531px;height:27px"></div>
<div class="vl" style="left:371px;top:531px;height:27px"></div>
<div class="vl" style="left:407px;top:531px;height:27px"></div>
<div class="vl" style="left:533px;top:531px;height:27px"></div>
<div class="vl" style="left:580px;top:531px;height:27px"></div>
<div class="vl" style="left:661px;top:531px;height:27px"></div>
<div class="vl" style="left:711px;top:531px;height:27px"></div>
<div class="vl" style="left:770px;top:531px;height:27px"></div>
<div class="vl" style="left:829px;top:531px;height:27px"></div>
<div class="vl" style="left:903px;top:531px;height:27px"></div>
<div class="vl" style="left:940px;top:531px;height:27px"></div>
<div class="vl" style="left:977px;top:531px;height:27px"></div>
<div class="cell lg" style="left:5px;top:558px;width:81px;background:#0aa19f"><i>球会友谊</i></div>
<div class="cell" style="left:86px;top:558px;width:73px">24-07-06</div>
<div class="cell" style="left:159px;top:558px;width:126px"><span style="color:#127012"><i>里杰卡</i></span></div>
<div class="cell" style="left:285px;top:558px;width:86px"><span style="color:#cc1c1c">7-1</span>(3-0)</div>
<div class="cell" style="left:371px;top:558px;width:36px">0-0</div>
<div class="cell" style="left:407px;top:558px;width:126px"><span style="color:#1a1a1a"><i>比摩治</i></span></div>
<div class="cell od" style="left:533px;top:558px;width:47px"></div>
<div class="cell od" style="left:580px;top:558px;width:81px"></div>
<div class="cell od" style="left:661px;top:558px;width:50px"></div>
<div class="cell av" style="left:711px;top:558px;width:59px">1.09</div>
<div class="cell av" style="left:770px;top:558px;width:59px">7.89</div>
<div class="cell av" style="left:829px;top:558px;width:74px">19.62</div>
<div class="cell" style="left:903px;top:558px;width:37px;color:#cc1c1c"><i>胜</i></div>
<div class="cell" style="left:940px;top:558px;width:37px;color:#000"></div>
<div class="cell" style="left:977px;top:558px;width:55px;color:#000"></div>
<div class="hl" style="left:5px;top:583px;width:1027px"></div>
<div class="vl" style="left:86px;top:557px;height:27px"></div>
<div class="vl" style="left:159px;top:557px;height:27px"></div>
<div class="vl" style="left:285px;top:557px;height:27px"></div>
<div class="vl" style="left:371px;top:557px;height:27px"></div>
<div class="vl" style="left:407px;top:557px;height:27px"></div>
<div class="vl" style="left:533px;top:557px;height:27px"></div>
<div class="vl" style="left:580px;top:557px;height:27px"></div>
<div class="vl" style="left:661px;top:557px;height:27px"></div>
<div class="vl" style="left:711px;top:557px;height:27px"></div>
<div class="vl" style="left:770px;top:557px;height:27px"></div>
<div class="vl" style="left:829px;top:557px;height:27px"></div>
<div class="vl" style="left:903px;top:557px;height:27px"></div>
<div class="vl" style="left:940px;top:557px;height:27px"></div>
<div class="vl" style="left:977px;top:557px;height:27px"></div>
<div class="cell lg" style="left:5px;top:584px;width:81px;background:#0aa19f"><i>球会友谊</i></div>
<div class="cell alt" style="left:86px;top:584px;width:73px">24-06-30</div>
<div class="cell alt" style="left:159px;top:584px;width:126px"><span style="color:#127012"><i>里杰卡</i></span></div>
<div class="cell alt" style="left:285px;top:584px;width:86px"><span style="color:#cc1c1c">1-0</span>(1-0)</div>
<div class="cell alt" style="left:371px;top:584px;width:36px">6-2</div>
<div class="cell alt" style="left:407px;top:584px;width:126px"><span style="color:#1a1a1a"><i>科佩尔</i></span></div>
<div class="cell od" style="left:533px;top:584px;width:47px">0.76</div>
<div class="cell od" style="left:580px;top:584px;width:81px"><i>半</i>/<i>一</i></div>
<div class="cell od" style="left:661px;top:584px;width:50px">0.94</div>
<div class="cell av" style="left:711px;top:584px;width:59px">1.62</div>
<div class="cell av" style="left:770px;top:584px;width:59px">4.04</div>
<div class="cell av" style="left:829px;top:584px;width:74px">4.26</div>
<div class="cell alt" style="left:903px;top:584px;width:37px;color:#cc1c1c"><i>胜</i></div>
<div class="cell alt" style="left:940px;top:584px;width:37px;color:#cc1c1c"><i>赢</i></div>
<div class="cell alt" style="left:977px;top:584px;width:55px;color:#1010c8"><i>小</i></div>
<div class="hl" style="left:5px;top:609px;width:1027px"></div>
<div class="vl" style="left:86px;top:583px;height:27px"></div>
<div class="vl" style="left:159px;top:583px;height:27px"></div>
<div class="vl" style="left:285px;top:583px;height:27px"></div>
<div class="vl" style="left:371px;top:583px;height:27px"></div>
<div class="vl" style="left:407px;top:583px;height:27px"></div>
<div class="vl" style="left:533px;top:583px;height:27px"></div>
<div class="vl" style="left:580px;top:583px;height:27px"></div>
<div class="vl" style="left:661px;top:583px;height:27px"></div>
<div class="vl" style="left:711px;top:583px;height:27px"></div>
<div class="vl" style="left:770px;top:583px;height:27px"></div>
<div class="vl" style="left:829px;top:583px;height:27px"></div>
<div class="vl" style="left:903px;top:583px;height:27px"></div>
<div class="vl" style="left:940px;top:583px;height:27px"></div>
<div class="vl" style="left:977px;top:583px;height:27px"></div>
<div class="cell lg" style="left:5px;top:610px;width:81px;background:#cf6600"><i>克亚甲</i></div>
<div class="cell" style="left:86px;top:610px;width:73px">24-05-26</div>
<div class="cell" style="left:159px;top:610px;width:126px"><span style="color:#127012"><i>里杰卡</i></span></div>
<div class="cell" style="left:285px;top:610px;width:86px"><span style="color:#cc1c1c">4-0</span>(2-0)</div>
<div class="cell" style="left:371px;top:610px;width:36px">6-4</div>
<div class="cell" style="left:407px;top:610px;width:126px"><span style="color:#1a1a1a"><i>比路朴</i></span></div>
<div class="cell od" style="left:533px;top:610px;width:47px">0.76</div>
<div class="cell od" style="left:580px;top:610px;width:81px"><i>球半</i>/<i>两</i></div>
<div class="cell od" style="left:661px;top:610px;width:50px">0.94</div>
<div class="cell av" style="left:711px;top:610px;width:59px">1.24</div>
<div class="cell av" style="left:770px;top:610px;width:59px">5.71</div>
<div class="cell av" style="left:829px;top:610px;width:74px">9.29</div>
<div class="cell" style="left:903px;top:610px;width:37px;color:#cc1c1c"><i>胜</i></div>
<div class="cell" style="left:940px;top:610px;width:37px;color:#cc1c1c"><i>赢</i></div>
<div class="cell" style="left:977px;top:610px;width:55px;color:#cc1c1c"><i>大</i></div>
<div class="hl" style="left:5px;top:635px;width:1027px"></div>
<div class="vl" style="left:86px;top:609px;height:27px"></div>
<div class="vl" style="left:159px;top:609px;height:27px"></div>
<div class="vl" style="left:285px;top:609px;height:27px"></div>
<div class="vl" style="left:371px;top:609px;height:27px"></div>
<div class="vl" style="left:407px;top:609px;height:27px"></div>
<div class="vl" style="left:533px;top:609px;height:27px"></div>
<div class="vl" style="left:580px;top:609px;height:27px"></div>
<div class="vl" style="left:661px;top:609px;height:27px"></div>
<div class="vl" style="left:711px;top:609px;height:27px"></div>
<div class="vl" style="left:770px;top:609px;height:27px"></div>
<div class="vl" style="left:829px;top:609px;height:27px"></div>
<div class="vl" style="left:903px;top:609px;height:27px"></div>
<div class="vl" style="left:940px;top:609px;height:27px"></div>
<div class="vl" style="left:977px;top:609px;height:27px"></div>
<div class="cell lg" style="left:5px;top:636px;width:81px;background:#3264cc"><i>克亚杯</i></div>
<div class="cell alt" style="left:86px;top:636px;width:73px">24-05-22</div>
<div class="cell alt" style="left:159px;top:636px;width:126px"><span style="color:#127012"><i>里杰卡</i></span></div>
<div class="cell alt" style="left:285px;top:636px;width:86px"><span style="color:#cc1c1c">1-3</span>(0-2)</div>
<div class="cell alt" style="left:371px;top:636px;width:36px">6-5</div>
<div class="cell alt" style="left:407px;top:636px;width:126px"><span style="color:#1a1a1a"><i>萨格勒布迪纳摩</i></span></div>
<div class="cell od" style="left:533px;top:636px;width:47px">0.82</div>
<div class="cell od" style="left:580px;top:636px;width:81px"><i>平手</i></div>
<div class="cell od" style="left:661px;top:636px;width:50px">1.00</div>
<div class="cell av" style="left:711px;top:636px;width:59px">2.51</div>
<div class="cell av" style="left:770px;top:636px;width:59px">3.02</div>
<div class="cell av" style="left:829px;top:636px;width:74px">2.78</div>
<div class="cell alt" style="left:903px;top:636px;width:37px;color:#1010c8"><i>负</i></div>
<div class="cell alt" style="left:940px;top:636px;width:37px;color:#1010c8"><i>输</i></div>
<div class="cell alt" style="left:977px;top:636px;width:55px;color:#cc1c1c"><i>大</i></div>
<div class="hl" style="left:5px;top:661px;width:1027px"></div>
<div class="vl" style="left:86px;top:635px;height:27px"></div>
<div class="vl" style="left:159px;top:635px;height:27px"></div>
<div class="vl" style="left:285px;top:635px;height:27px"></div>
<div class="vl" style="left:371px;top:635px;height:27px"></div>
<div class="vl" style="left:407px;top:635px;height:27px"></div>
<div class="vl" style="left:533px;top:635px;height:27px"></div>
<div class="vl" style="left:580px;top:635px;height:27px"></div>
<div class="vl" style="left:661px;top:635px;height:27px"></div>
<div class="vl" style="left:711px;top:635px;height:27px"></div>
<div class="vl" style="left:770px;top:635px;height:27px"></div>
<div class="vl" style="left:829px;top:635px;height:27px"></div>
<div class="vl" style="left:903px;top:635px;height:27px"></div>
<div class="vl" style="left:940px;top:635px;height:27px"></div>
<div class="vl" style="left:977px;top:635px;height:27px"></div>
<div class="cell lg" style="left:5px;top:662px;width:81px;background:#cf6600"><i>克亚甲</i></div>
<div class="cell" style="left:86px;top:662px;width:73px">24-05-20</div>
<div class="cell" style="left:159px;top:662px;width:126px"><span style="color:#1a1a1a"><i>奥斯杰克</i></span></div>
<div class="cell" style="left:285px;top:662px;width:86px"><span style="color:#cc1c1c">2-0</span>(1-0)</div>
<div class="cell" style="left:371px;top:662px;width:36px">2-7</div>
<div class="cell" style="left:407px;top:662px;width:126px"><span style="color:#127012"><i>里杰卡</i></span></div>
<div class="cell od" style="left:533px;top:662px;width:47px">0.75</div>
<div class="cell od" style="left:580px;top:662px;width:81px"><i>半</i>/<i>一</i></div>
<div class="cell od" style="left:661px;top:662px;width:50px">1.07</div>
<div class="cell av" style="left:711px;top:662px;width:59px">1.63</div>
<div class="cell av" style="left:770px;top:662px;width:59px">3.70</div>
<div class="cell av" style="left:829px;top:662px;width:74px">4.87</div>
<div class="cell" style="left:903px;top:662px;width:37px;color:#1010c8"><i>负</i></div>
<div class="cell" style="left:940px;top:662px;width:37px;color:#1010c8"><i>输</i></div>
<div class="cell" style="left:977px;top:662px;width:55px;color:#1010c8"><i>小</i></div>
<div class="hl" style="left:5px;top:687px;width:1027px"></div>
<div class="vl" style="left:86px;top:661px;height:27px"></div>
<div class="vl" style="left:159px;top:661px;height:27px"></div>
<div class="vl" style="left:285px;top:661px;height:27px"></div>
<div class="vl" style="left:371px;top:661px;height:27px"></div>
<div class="vl" style="left:407px;top:661px;height:27px"></div>
<div class="vl" style="left:533px;top:661px;height:27px"></div>
<div class="vl" style="left:580px;top:661px;height:27px"></div>
<div class="vl" style="left:661px;top:661px;height:27px"></div>
<div class="vl" style="left:711px;top:661px;height:27px"></div>
<div class="vl" style="left:770px;top:661px;height:27px"></div>
<div class="vl" style="left:829px;top:661px;height:27px"></div>
<div class="vl" style="left:903px;top:661px;height:27px"></div>
<div class="vl" style="left:940px;top:661px;height:27px"></div>
<div class="vl" style="left:977px;top:661px;height:27px"></div>
<div class="cell lg" style="left:5px;top:688px;width:81px;background:#3264cc"><i>克亚杯</i></div>
<div class="cell alt" style="left:86px;top:688px;width:73px">24-05-16</div>
<div class="cell alt" style="left:159px;top:688px;width:126px"><span style="color:#1a1a1a"><i>萨格勒布迪纳摩</i></span></div>
<div class="cell alt" style="left:285px;top:688px;width:86px"><span style="color:#cc1c1c">0-0</span>(0-0)</div>
<div class="cell alt" style="left:371px;top:688px;width:36px">2-3</div>
<div class="cell alt" style="left:407px;top:688px;width:126px"><span style="color:#127012"><i>里杰卡</i></span></div>
<div class="cell od" style="left:533px;top:688px;width:47px">0.79</div>
<div class="cell od" style="left:580px;top:688px;width:81px"><i>半球</i></div>
<div class="cell od" style="left:661px;top:688px;width:50px">1.03</div>
<div class="cell av" style="left:711px;top:688px;width:59px">1.76</div>
<div class="cell av" style="left:770px;top:688px;width:59px">3.33</div>
<div class="cell av" style="left:829px;top:688px;width:74px">4.44</div>
<div class="cell alt" style="left:903px;top:688px;width:37px;color:#127012"><i>平</i></div>
<div class="cell alt" style="left:940px;top:688px;width:37px;color:#cc1c1c"><i>赢</i></div>
<div class="cell alt" style="left:977px;top:688px;width:55px;color:#1010c8"><i>小</i></div>
<div class="hl" style="left:5px;top:713px;width:1027px"></div>
<div class="vl" style="left:86px;top:687px;height:27px"></div>
<div class="vl" style="left:159px;top:687px;height:27px"></div>
<div class="vl" style="left:285px;top:687px;height:27px"></div>
<div class="vl" style="left:371px;top:687px;height:27px"></div>
<div class="vl" style="left:407px;top:687px;height:27px"></div>
<div class="vl" style="left:533px;top:687px;height:27px"></div>
<div class="vl" style="left:580px;top:687px;height:27px"></div>
<div class="vl" style="left:661px;top:687px;height:27px"></div>
<div class="vl" style="left:711px;top:687px;height:27px"></div>
<div class="vl" style="left:770px;top:687px;height:27px"></div>
<div class="vl" style="left:829px;top:687px;height:27px"></div>
<div class="vl" style="left:903px;top:687px;height:27px"></div>
<div class="vl" style="left:940px;top:687px;height:27px"></div>
<div class="vl" style="left:977px;top:687px;height:27px"></div>
<div class="hl" style="left:5px;top:414px;width:1027px"></div>
<div class="hl" style="left:5px;top:453px;width:1027px"></div>
<div class="summ" style="left:5px;top:714px;width:1027px"><i>近</i><span style="color:#cc1c1c">10</span><i>场</i>,<i>胜</i>4<i>平</i>2<i>负</i>4, <i>胜率</i>:<span style="color:#cc1c1c">40%</span> <i>让胜率</i>:<span style="color:#cc1c1c">55.6%</span> <i>大率</i>:<span style="color:#cc1c1c">33.3%</span> <i>单率</i>:<span style="color:#cc1c1c">30%</span></div>
<div class="hl" style="left:5px;top:739px;width:1027px"></div>
<div class="vl" style="left:5px;top:414px;height:327px"></div>
<div class="vl" style="left:1032px;top:414px;height:327px"></div>
<div class="ftx" style="left:408px;top:388px;"><i>近</i></div><div class="fsel" style="left:425px;top:395px"><svg class="d10" width="14" height="11" viewBox="0 0 14 11"><path d="M0.9 2.3 L2.7 0.8 L2.7 8.9 M0.7 8.9 L4.5 8.9" fill="none" stroke="#000" stroke-width="1.2"/><rect x="7.4" y="1" width="4.2" height="7.9" rx="1.2" fill="none" stroke="#000" stroke-width="1.1"/></svg><svg class="chev" width="10" height="7" viewBox="0 0 10 7"><path d="M1 1 L5 5 L9 1" fill="none" stroke="#000" stroke-width="2"/></svg></div><div class="ftx" style="left:466px;top:388px;"><i>场</i></div><div class="cb" style="left:482px;top:395px"></div><div class="ftx" style="left:499px;top:388px;"><i>同客</i></div><div class="cb on" style="left:526px;top:395px"><svg width="13" height="13" viewBox="0 0 13 13"><path d="M2.6 7 L5.2 9.4 L10.3 3.2" fill="none" stroke="#fff" stroke-width="2"/></svg></div><div class="ftx" style="left:539px;top:388px;"><i>球会友谊</i></div><div class="cb on" style="left:587px;top:395px"><svg width="13" height="13" viewBox="0 0 13 13"><path d="M2.6 7 L5.2 9.4 L10.3 3.2" fill="none" stroke="#fff" stroke-width="2"/></svg></div><div class="ftx" style="left:600px;top:388px;"><i>克亚甲</i></div><div class="cb on" style="left:636px;top:395px"><svg width="13" height="13" viewBox="0 0 13 13"><path d="M2.6 7 L5.2 9.4 L10.3 3.2" fill="none" stroke="#fff" stroke-width="2"/></svg></div><div class="ftx" style="left:649px;top:388px;"><i>克亚杯</i></div>
<div class="sel" style="left:590px;top:64px;width:61px"><span>Crow*</span><svg class="chev" width="11" height="8" viewBox="0 0 11 8"><path d="M1.3 1.3 L5.5 5.5 L9.7 1.3" fill="none" stroke="#000" stroke-width="2"/></svg></div>
<div class="sel" style="left:659px;top:64px;width:51px"><span><i>终指</i></span><svg class="chev" width="11" height="8" viewBox="0 0 11 8"><path d="M1.3 1.3 L5.5 5.5 L9.7 1.3" fill="none" stroke="#000" stroke-width="2"/></svg></div>
<div class="sel" style="left:757px;top:64px;width:70px"><span><i>平均值</i></span><svg class="chev" width="11" height="8" viewBox="0 0 11 8"><path d="M1.3 1.3 L5.5 5.5 L9.7 1.3" fill="none" stroke="#000" stroke-width="2"/></svg></div>
<div class="sel" style="left:835px;top:64px;width:51px"><span><i>终指</i></span><svg class="chev" width="11" height="8" viewBox="0 0 11 8"><path d="M1.3 1.3 L5.5 5.5 L9.7 1.3" fill="none" stroke="#000" stroke-width="2"/></svg></div>
<div class="sel" style="left:946px;top:64px;width:51px"><span><i>全场</i></span><svg class="chev" width="11" height="8" viewBox="0 0 11 8"><path d="M1.3 1.3 L5.5 5.5 L9.7 1.3" fill="none" stroke="#000" stroke-width="2"/></svg></div>
<div class="sel" style="left:562px;top:415px;width:61px"><span>Crow*</span><svg class="chev" width="11" height="8" viewBox="0 0 11 8"><path d="M1.3 1.3 L5.5 5.5 L9.7 1.3" fill="none" stroke="#000" stroke-width="2"/></svg></div>
<div class="sel" style="left:631px;top:415px;width:51px"><span><i>终指</i></span><svg class="chev" width="11" height="8" viewBox="0 0 11 8"><path d="M1.3 1.3 L5.5 5.5 L9.7 1.3" fill="none" stroke="#000" stroke-width="2"/></svg></div>
<div class="sel" style="left:743px;top:415px;width:70px"><span><i>平均值</i></span><svg class="chev" width="11" height="8" viewBox="0 0 11 8"><path d="M1.3 1.3 L5.5 5.5 L9.7 1.3" fill="none" stroke="#000" stroke-width="2"/></svg></div>
<div class="sel" style="left:820px;top:415px;width:51px"><span><i>终指</i></span><svg class="chev" width="11" height="8" viewBox="0 0 11 8"><path d="M1.3 1.3 L5.5 5.5 L9.7 1.3" fill="none" stroke="#000" stroke-width="2"/></svg></div>
<div class="sel" style="left:942px;top:415px;width:51px"><span><i>全场</i></span><svg class="chev" width="11" height="8" viewBox="0 0 11 8"><path d="M1.3 1.3 L5.5 5.5 L9.7 1.3" fill="none" stroke="#000" stroke-width="2"/></svg></div>
</body></html>
